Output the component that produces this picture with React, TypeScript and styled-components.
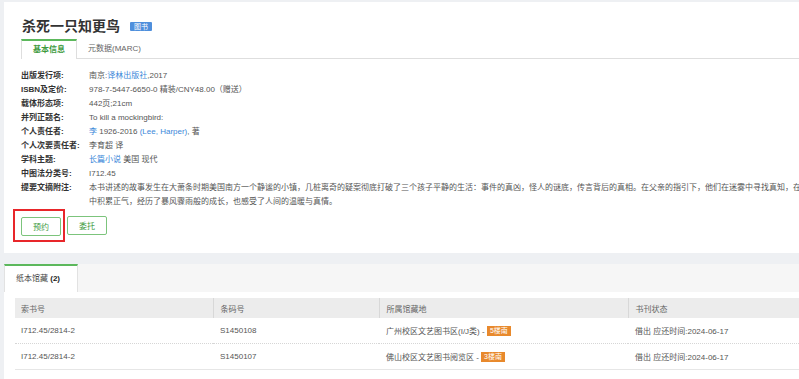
import styled, { createGlobalStyle } from "styled-components"

const GlobalStyle = createGlobalStyle`
  html, body {
    margin: 0;
    background: #eef0f3;
    overflow: hidden;
  }
  body {
    font-family: "Liberation Sans", Arial, "Noto Sans CJK SC", sans-serif;
    font-size: 8px;
    color: #555;
  }
`

const SUMMARY =
  "本书讲述的故事发生在大萧条时期美国南方一个静谧的小镇，几桩离奇的疑案彻底打破了三个孩子平静的生活：事件的真凶，怪人的谜底，传言背后的真相。在父亲的指引下，他们在迷雾中寻找真知，在磨难中积累正气，经历了暴风骤雨般的成长，也感受了人间的温暖与真情。"

const holdings = [
  { call: "I712.45/2814-2", barcode: "S1450108", place: "广州校区文艺图书区(I/J类) - ", floor: "5楼南", status: "借出 应还时间:2024-06-17" },
  { call: "I712.45/2814-2", barcode: "S1450107", place: "佛山校区文艺图书阅览区 - ", floor: "3楼南", status: "借出 应还时间:2024-06-17" },
]

export default function App() {
  const rows = [
    { label: "出版发行项:", value: <>南京:<Link>译林出版社</Link>,2017</> },
    { label: "ISBN及定价:", value: "978-7-5447-6650-0 精装/CNY48.00（赠送）" },
    { label: "载体形态项:", value: "442页;21cm" },
    { label: "并列正题名:", value: "To kill a mockingbird:" },
    {
      label: "个人责任者:",
      value: (
        <>
          <Link>李</Link> 1926-2016 <Link>(Lee, Harper)</Link>, 著
        </>
      ),
    },
    { label: "个人次要责任者:", value: "李育超 译" },
    { label: "学科主题:", value: <><Link>长篇小说</Link> 美国 现代</> },
    { label: "中图法分类号:", value: "I712.45" },
    { label: "提要文摘附注:", value: <Summary>{SUMMARY}</Summary> },
  ]

  return (
    <>
      <GlobalStyle />
      <Page>
        <Card>
          <TitleRow>
            <Title>杀死一只知更鸟</Title>
            <TypeBadge>图书</TypeBadge>
          </TitleRow>
          <TabBar>
            <Tab $active>基本信息</Tab>
            <Tab>元数据(MARC)</Tab>
          </TabBar>
          <InfoList>
            {rows.map((row) => (
              <InfoLine key={row.label}>
                <Label>{row.label}</Label>
                <Value>{row.value}</Value>
              </InfoLine>
            ))}
          </InfoList>
          <Actions>
            <Highlight>
              <ActionButton>预约</ActionButton>
            </Highlight>
            <ActionButton>委托</ActionButton>
          </Actions>
        </Card>
        <HoldingsCard>
          <HoldingsTabs>
            <HoldingsTab>
              纸本馆藏 <b>(2)</b>
            </HoldingsTab>
          </HoldingsTabs>
          <HoldingsBody>
            <Table>
              <colgroup>
                <col style={{ width: 198 }} />
                <col style={{ width: 166 }} />
                <col style={{ width: 249 }} />
                <col />
              </colgroup>
              <thead>
                <tr>
                  <Th>索书号</Th>
                  <Th>条码号</Th>
                  <Th>所属馆藏地</Th>
                  <Th>书刊状态</Th>
                </tr>
              </thead>
              <tbody>
                {holdings.map((h) => (
                  <Tr key={h.barcode}>
                    <Td>{h.call}</Td>
                    <Td>{h.barcode}</Td>
                    <Td>
                      {h.place}
                      <FloorTag>{h.floor}</FloorTag>
                    </Td>
                    <Td>{h.status}</Td>
                  </Tr>
                ))}
              </tbody>
            </Table>
          </HoldingsBody>
        </HoldingsCard>
      </Page>
    </>
  )
}

const Page = styled.div`
  width: 880px;
  padding: 2px 0 0 4px;
  display: flex;
  flex-direction: column;
  gap: 11px;
`

const Card = styled.section`
  background: #fff;
  padding: 14px 17px 11px;
`

const TitleRow = styled.div`
  display: flex;
  align-items: center;
  height: 20px;
  padding-left: 1px;
`

const Title = styled.h1`
  margin: 0;
  font-size: 14px;
  font-weight: bold;
  color: #333;
  line-height: 20px;
`

const TypeBadge = styled.span`
  margin-left: 10px;
  background: #4f8fdc;
  color: #fff;
  font-size: 7px;
  line-height: 9px;
  padding: 0 4px;
  border-radius: 1px;
`

const TabBar = styled.div`
  display: flex;
  margin-top: 3px;
  border-bottom: 1px solid #dedede;
  height: 19px;
`

const Tab = styled.div<{ $active?: boolean }>`
  padding: 0 11px;
  height: ${(p) => (p.$active ? "17px" : "19px")};
  line-height: ${(p) => (p.$active ? "17px" : "19px")};
  color: ${(p) => (p.$active ? "#3d9a3d" : "#666")};
  font-weight: ${(p) => (p.$active ? "bold" : "normal")};
  background: #fff;
  border-top: ${(p) => (p.$active ? "2px solid #5cb85c" : "none")};
  border-left: ${(p) => (p.$active ? "1px solid #dedede" : "none")};
  border-right: ${(p) => (p.$active ? "1px solid #dedede" : "none")};
  margin-bottom: ${(p) => (p.$active ? "-1px" : "0")};
  padding-bottom: ${(p) => (p.$active ? "1px" : "0")};
`

const InfoList = styled.div`
  margin-top: 10px;
  display: flex;
  flex-direction: column;
`

const InfoLine = styled.div`
  display: flex;
  line-height: 14px;
`

const Label = styled.div`
  width: 68px;
  flex: none;
  font-weight: bold;
  color: #333;
  white-space: nowrap;
`

const Value = styled.div`
  color: #555;
`

const Summary = styled.div`
  width: 732px;
`

const Link = styled.span`
  color: #3a87d9;
`

const Actions = styled.div`
  display: flex;
  align-items: center;
  gap: 2px;
  margin-left: -8px;
`

const Highlight = styled.div`
  border: 2px solid #e8262a;
  padding: 6px 2px 4px 6px;
`

const ActionButton = styled.button`
  width: 40px;
  height: 19px;
  border: 1px solid #7cc47c;
  border-radius: 2px;
  background: #fff;
  color: #3d9a3d;
  font-family: inherit;
  font-size: 8px;
  padding: 0;
  display: block;
`

const HoldingsCard = styled.section`
  background: #fff;
  min-height: 120px;
`

const HoldingsTabs = styled.div`
  display: flex;
  background: #f6f6f6;
  height: 28px;
`

const HoldingsTab = styled.div`
  width: 74px;
  box-sizing: border-box;
  background: #fff;
  border-top: 2px solid #5cb85c;
  border-left: 1px solid #e2e2e2;
  border-right: 1px solid #e2e2e2;
  padding-left: 11px;
  line-height: 26px;
  color: #444;
  b {
    color: #222;
  }
`

const HoldingsBody = styled.div`
  padding: 6px 11px 10px;
`

const Table = styled.table`
  width: 100%;
  border-collapse: collapse;
  table-layout: fixed;
`

const Th = styled.th`
  background: #ececec;
  height: 20px;
  padding: 0 7px;
  text-align: left;
  font-weight: normal;
  color: #666;
  border-left: 1px solid #d8d8d8;
  &:first-child {
    border-left: none;
    padding-left: 6px;
  }
`

const Tr = styled.tr`
  border-bottom: 1px dotted #d6d6d6;
  &:last-child {
    border-bottom: 1px solid #e6e6e6;
  }
`

const Td = styled.td`
  height: 25px;
  padding: 0 7px;
  color: #555;
  white-space: nowrap;
  &:first-child {
    padding-left: 6px;
  }
`

const FloorTag = styled.span`
  display: inline-block;
  background: #e8892c;
  color: #fff;
  font-size: 7px;
  line-height: 10px;
  padding: 0 3px;
  vertical-align: middle;
`
